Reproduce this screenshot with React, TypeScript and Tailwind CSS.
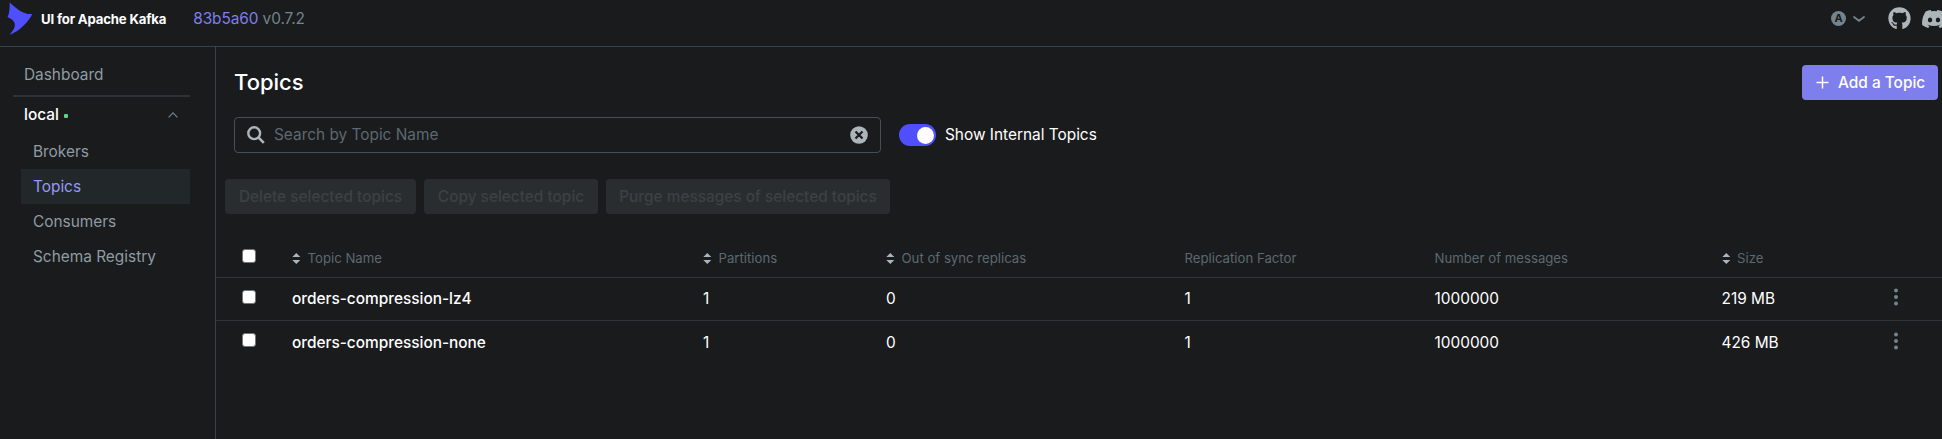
import { FaDiscord, FaGithub } from 'react-icons/fa';

const columns = [
  { label: 'Topic Name', sortable: true },
  { label: 'Partitions', sortable: true },
  { label: 'Out of sync replicas', sortable: true },
  { label: 'Replication Factor', sortable: false },
  { label: 'Number of messages', sortable: false },
  { label: 'Size', sortable: true },
];

const topics = [
  { name: 'orders-compression-lz4', cells: ['1', '0', '1', '1000000', '219 MB'] },
  { name: 'orders-compression-none', cells: ['1', '0', '1', '1000000', '426 MB'] },
];

const rowGrid =
  'grid grid-cols-[76px_411px_183px_298.5px_250px_287px_1fr] pr-[44px]';

function Logo() {
  return (
    <svg className="h-[34px] w-[26px]" viewBox="0 0 26 34" fill="#4f4fff">
      <path d="M2.6 1.2 C9 7.5 17 14 25.3 13 C22.5 19.5 12 31 2.6 33.8 C6 29.5 8.6 26.5 7.6 22 C6.8 19.3 3.4 17.6 0.6 16 C2.6 12 2.9 6 2.6 1.2 Z" />
    </svg>
  );
}

function Checkbox({ className = '' }: { className?: string }) {
  return (
    <span
      className={`block size-3.5 rounded-[3px] border border-[#767676] bg-white ${className}`}
    />
  );
}

function SortIcon() {
  return (
    <svg className="mr-[6.5px] h-[11px] w-[9px]" viewBox="0 0 9 11" fill="#abb5ba">
      <path d="M4.3 0 L8.3 4.1 H0.3 Z M4.3 11 L8.3 6.9 H0.3 Z" />
    </svg>
  );
}

function Header() {
  return (
    <header className="flex h-[47px] shrink-0 items-start border-b border-[#394246] pl-[7px]">
      <div className="mt-[1px]">
        <Logo />
      </div>
      <span className="mt-[9px] ml-[8px] text-[13.2px] leading-5 font-bold tracking-[-0.18px] text-white">
        UI for Apache Kafka
      </span>
      <span className="mt-[9px] ml-[27px] text-[15.4px] leading-5 tracking-[-0.08px] text-[#73848c]">
        <span className="text-[#7e7eec]">83b5a60</span> v0.7.2
      </span>
      <div className="ml-auto flex h-[37px] items-center">
        <span className="flex size-[15px] items-center justify-center rounded-full bg-[#73848c] text-[11px] leading-none font-bold text-[#1a1b1d]">
          A
        </span>
        <svg className="ml-[7px] h-[6px] w-[12px]" viewBox="0 0 12 6" fill="none" stroke="#73848c" strokeWidth="1.8">
          <path d="M1 1 L6 4.8 L11 1" strokeLinecap="round" />
        </svg>
        <FaGithub className="ml-[23px] size-[23px] text-[#abb5ba]" />
        <FaDiscord className="-mr-[5px] ml-[10px] size-[26px] text-[#abb5ba]" />
      </div>
    </header>
  );
}

function Sidebar() {
  return (
    <nav className="w-[216px] shrink-0 border-r border-[#394246] pt-[9px] pl-[13px] text-[15.4px] text-[#8f9ca3]">
      <div className="w-[177px]">
        <div className="flex h-[41px] items-center border-b-2 border-[#303336] pb-[2px] pl-[11px]">Dashboard</div>
        <div className="flex h-[36px] items-center pl-[11px] font-medium text-white">
          local
          <span className="mt-[1px] ml-[5.5px] size-1 rounded-[1px] bg-[#5cd685]" />
          <svg className="mr-[12.5px] ml-auto h-[6px] w-[10px]" viewBox="0 0 10 6" fill="none" stroke="#73848c" strokeWidth="1.2">
            <path d="M0.6 5.3 L5 0.9 L9.4 5.3" />
          </svg>
        </div>
        <ul className="mt-[1px] ml-[8px]">
          {['Brokers', 'Topics', 'Consumers', 'Schema Registry'].map((item) => (
            <li
              key={item}
              className={`flex h-[35px] items-center pt-[1px] pl-[12px] ${
                item === 'Topics' ? 'bg-[#22282a] text-[#9797f6]' : ''
              }`}
            >
              {item}
            </li>
          ))}
        </ul>
      </div>
    </nav>
  );
}

function Toolbar() {
  return (
    <div className="mt-[17px] flex items-center pl-[18px]">
      <div className="flex h-9 w-[647px] items-center rounded-[4px] border border-[#454f54] pr-[12px] pl-[12px]">
        <svg className="size-[18px]" viewBox="0 0 18 18" fill="none" stroke="#abb5ba">
          <circle cx="7.2" cy="7.2" r="5.9" strokeWidth="2.4" />
          <path d="M11.4 11.4 L16.8 16.8" strokeWidth="2.6" />
        </svg>
        <span className="ml-[9px] text-[15.4px] text-[#5c6970]">Search by Topic Name</span>
        <svg className="ml-auto size-[18px]" viewBox="0 0 18 18">
          <circle cx="9" cy="9" r="8.8" fill="#abb5ba" />
          <path d="M5.5 5.5 L12.5 12.5 M12.5 5.5 L5.5 12.5" stroke="#1a1b1d" strokeWidth="2.2" />
        </svg>
      </div>
      <span className="ml-[18px] flex h-[22px] w-[37px] items-center justify-end rounded-full bg-[#4f4fff] pr-[2px]">
        <span className="size-[17px] rounded-full bg-white" />
      </span>
      <span className="ml-[9px] text-[15.4px] text-white">Show Internal Topics</span>
    </div>
  );
}

function BulkActions() {
  return (
    <div className="mt-[26px] flex gap-2 pl-[9px] text-[15.4px] font-medium text-[#3b4145]">
      <span className="flex h-[35px] w-[191px] items-center justify-center rounded-[4px] bg-[#2a2d30]">Delete selected topics</span>
      <span className="flex h-[35px] w-[174px] items-center justify-center rounded-[4px] bg-[#2a2d30]">Copy selected topic</span>
      <span className="flex h-[35px] w-[284px] items-center justify-center rounded-[4px] bg-[#2a2d30]">Purge messages of selected topics</span>
    </div>
  );
}

function TopicsTable() {
  return (
    <div className="mt-[25px]">
      <div className={`${rowGrid} h-[39px] border-b border-[#303437] text-[13.2px] text-[#5c6970]`}>
        <Checkbox className="mt-[10px] ml-[26px]" />
        {columns.map((c) => (
          <div key={c.label} className="flex items-center pt-[1px]">
            {c.sortable && <SortIcon />}
            {c.label}
          </div>
        ))}
      </div>
      {topics.map((t, i) => (
        <div
          key={t.name}
          className={`${rowGrid} text-[15.4px] text-white ${
            i === 0 ? 'h-[43px] border-b border-[#303437]' : 'h-[44px]'
          }`}
        >
          <Checkbox className="mt-[12px] ml-[26px]" />
          <div className="flex items-center font-medium">{t.name}</div>
          {t.cells.slice(0, 4).map((value, k) => (
            <div key={k} className="flex items-center">{value}</div>
          ))}
          <div className="flex items-center">
            {t.cells[4]}
            <svg className="-mt-[4px] ml-auto h-[18px] w-[4px]" viewBox="0 0 4 18" fill="#73848c">
              <circle cx="2" cy="2.4" r="2" />
              <circle cx="2" cy="9" r="2" />
              <circle cx="2" cy="15.6" r="2" />
            </svg>
          </div>
        </div>
      ))}
    </div>
  );
}

export default function App() {
  return (
    <div className="flex h-[439px] w-full flex-col overflow-hidden bg-[#1a1b1d] font-['Inter',sans-serif]">
      <Header />
      <div className="flex min-h-0 flex-1">
        <Sidebar />
        <main className="min-w-0 flex-1">
          <div className="flex items-center justify-between pt-[18px] pr-[4px] pl-[18px]">
            <h1 className="text-[22px] leading-[35px] font-medium text-white">Topics</h1>
            <button className="flex h-[35px] w-[136px] items-center rounded-[4px] bg-[#7e7eec] pl-[14px] text-[15.4px] font-medium text-white">
              <svg className="mr-[9px] size-[13px]" viewBox="0 0 13 13" stroke="white" strokeWidth="1.5">
                <path d="M6.5 0.5 V12.5 M0.5 6.5 H12.5" />
              </svg>
              Add a Topic
            </button>
          </div>
          <Toolbar />
          <BulkActions />
          <TopicsTable />
        </main>
      </div>
    </div>
  );
}
